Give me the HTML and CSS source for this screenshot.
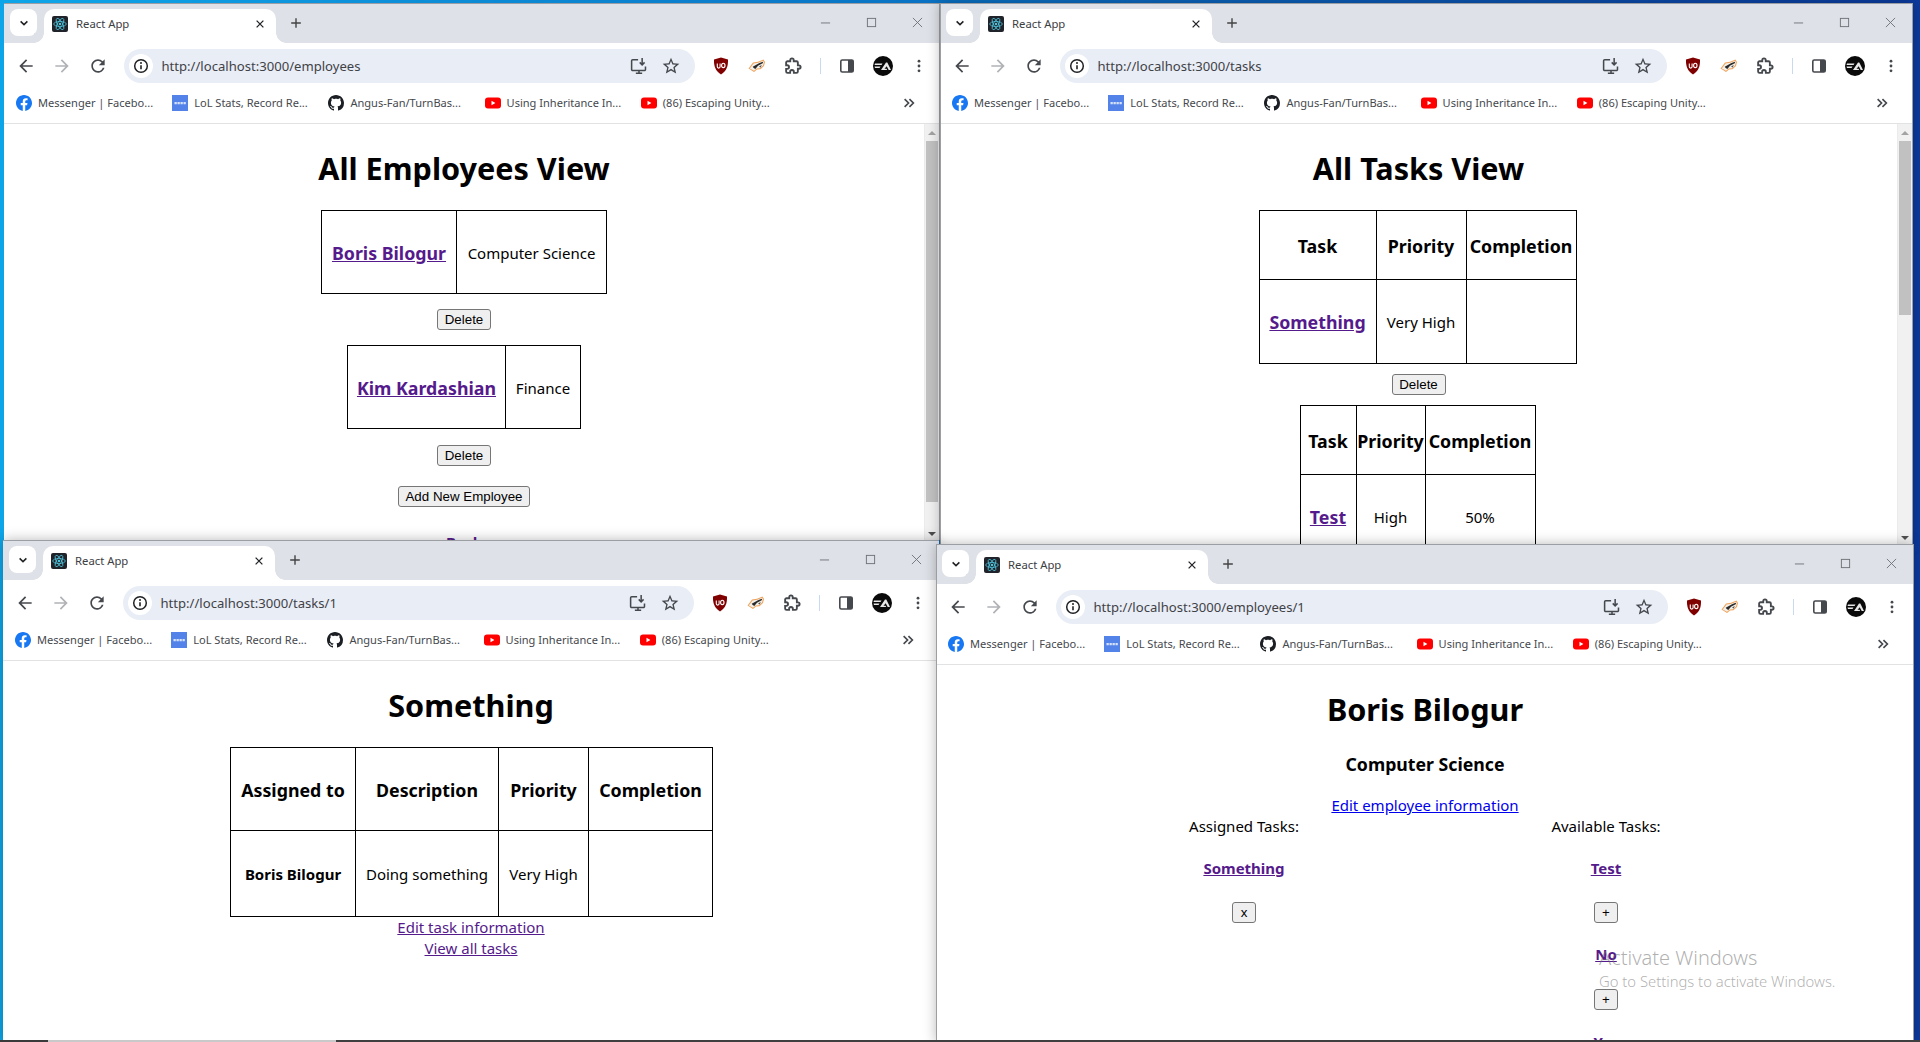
FILE: index.html
```html
<!DOCTYPE html>
<html lang="en">
<head>
<meta charset="utf-8">
<title>React App windows</title>
<link rel="stylesheet" href="styles.css">
</head>
<body>
<svg class="defs" aria-hidden="true">
  <symbol id="i-chev" viewBox="0 0 16 16"><path d="M3.5 5.8 8 10.2l4.5-4.4" fill="none" stroke="currentColor" stroke-width="2"/></symbol>
  <symbol id="i-x" viewBox="0 0 16 16"><path d="M3.5 3.5l9 9M12.5 3.5l-9 9" fill="none" stroke="currentColor" stroke-width="1.7"/></symbol>
  <symbol id="i-plus" viewBox="0 0 16 16"><path d="M8 2.5v11M2.5 8h11" fill="none" stroke="currentColor" stroke-width="1.6"/></symbol>
  <symbol id="i-back" viewBox="0 0 24 24"><path d="M20 11H7.83l5.59-5.59L12 4l-8 8 8 8 1.41-1.41L7.83 13H20v-2z" fill="currentColor"/></symbol>
  <symbol id="i-fwd" viewBox="0 0 24 24"><path d="M4 11h12.17l-5.59-5.59L12 4l8 8-8 8-1.41-1.41L16.17 13H4v-2z" fill="currentColor"/></symbol>
  <symbol id="i-reload" viewBox="0 0 24 24"><path d="M17.65 6.35A7.958 7.958 0 0 0 12 4c-4.42 0-7.99 3.58-7.99 8s3.57 8 7.99 8c3.73 0 6.84-2.55 7.73-6h-2.08A5.99 5.99 0 0 1 12 18c-3.31 0-6-2.69-6-6s2.69-6 6-6c1.66 0 3.14.69 4.22 1.78L13 11h7V4l-2.35 2.35z" fill="currentColor"/></symbol>
  <symbol id="i-info" viewBox="0 0 16 16"><circle cx="8" cy="8" r="6.3" fill="none" stroke="currentColor" stroke-width="1.5"/><path d="M8 7.2v4" stroke="currentColor" stroke-width="1.6"/><circle cx="8" cy="5" r="1" fill="currentColor"/></symbol>
  <symbol id="i-install" viewBox="0 0 20 20"><path d="M9 3H3a1.2 1.2 0 0 0-1.200 1.200v9.600A1.200 1.200 0 0 0 3 15h13a1.200 1.200 0 0 0 1.200-1.200V10.500M6.500 18h7M10 15v3" fill="none" stroke="currentColor" stroke-width="1.700"/><path d="M13.500 1v7.500M10.800 6l2.700 2.800L16.200 6" fill="none" stroke="currentColor" stroke-width="1.700"/></symbol>
  <symbol id="i-star" viewBox="0 0 24 24"><path d="M22 9.240l-7.190-.620L12 2 9.190 8.630 2 9.240l5.460 4.730L5.820 21 12 17.270 18.180 21l-1.630-7.030L22 9.240zM12 15.400l-3.760 2.270 1-4.280-3.320-2.880 4.380-.380L12 6.100l1.710 4.040 4.380.380-3.320 2.880 1 4.280L12 15.400z" fill="currentColor"/></symbol>
  <symbol id="i-ublock" viewBox="0 0 16 18"><path d="M8 .5 15 2.600c.3 6.400-1.400 11.600-7 14.900C2.400 14.200.7 9 1 2.600z" fill="#800000"/><path d="M4.300 6.500v3.300c0 1.700 2.800 1.700 2.800 0V6.500" fill="none" stroke="#fff" stroke-width="1.100"/><ellipse cx="10.300" cy="8.400" rx="1.700" ry="2.200" fill="none" stroke="#fff" stroke-width="1.100"/></symbol>
  <symbol id="i-badger" viewBox="0 0 18 14"><path d="M.5 9.500 5 3.500 10 2.800 15.500.5 17 3l-1 4-3.500 3.200-3.500.3-3 2.500-3.500-2.200z" fill="#efa45c"/><path d="M1.800 9.400 5.600 4.400 10.300 3.800 15 1.800 15.900 3.300 15 6.500 12 9.300 8.700 9.600 6 11.700 3.800 10.400z" fill="#f3f0ea"/><path d="M4.700 7.800 11 4.300l3.700-1.600.4 1.200L10 6.800 7.300 9.900 5.700 9z" fill="#2a2a2a"/><path d="M11 7.700l2.700-2-.9 2.700z" fill="#555"/></symbol>
  <symbol id="i-puzzle" viewBox="0 0 24 24"><path d="M20.500 11H19V7c0-1.100-.9-2-2-2h-4V3.500C13 2.120 11.880 1 10.500 1S8 2.120 8 3.500V5H4c-1.100 0-1.990.9-1.990 2v3.800H3.500c1.490 0 2.700 1.210 2.700 2.700s-1.210 2.700-2.700 2.700H2V20c0 1.100.9 2 2 2h3.800v-1.500c0-1.490 1.210-2.700 2.700-2.700 1.490 0 2.700 1.210 2.700 2.700V22H17c1.100 0 2-.9 2-2v-4h1.500c1.380 0 2.500-1.120 2.500-2.500S21.880 11 20.500 11z" fill="none" stroke="currentColor" stroke-width="2.700" transform="translate(1 1) scale(.92)"/></symbol>
  <symbol id="i-panel" viewBox="0 0 16 16"><rect x="1.800" y="2" width="12.400" height="12" rx="1.500" fill="#fff" stroke="currentColor" stroke-width="1.600"/><rect x="9" y="2" width="5.200" height="12" fill="currentColor"/></symbol>
  <symbol id="i-avatar" viewBox="0 0 20 20"><circle cx="10" cy="10" r="10" fill="#0a0a0a"/><path d="M2 7.500h7.500L8.500 9H1.500zM1.500 10.500h6l-1 1.500H2zM8 14l5-7.500h1.300L18 14h-2.300l-2-3.800L11.500 12.800h2l.7 1.200z" fill="#e8e8e8"/></symbol>
  <symbol id="i-dots" viewBox="0 0 16 16"><circle cx="8" cy="2.500" r="1.600" fill="currentColor"/><circle cx="8" cy="8" r="1.600" fill="currentColor"/><circle cx="8" cy="13.500" r="1.600" fill="currentColor"/></symbol>
  <symbol id="i-more" viewBox="0 0 16 16"><path d="M3 3.500 7.500 8 3 12.500M8.500 3.500 13 8l-4.500 4.500" fill="none" stroke="currentColor" stroke-width="1.900"/></symbol>
  <symbol id="i-min" viewBox="0 0 12 12"><path d="M1 6.500h10" stroke="currentColor" stroke-width="1"/></symbol>
  <symbol id="i-max" viewBox="0 0 12 12"><rect x="1.500" y="1.500" width="9" height="9" fill="none" stroke="currentColor" stroke-width="1"/></symbol>
  <symbol id="i-close" viewBox="0 0 12 12"><path d="M1 1l10 10M11 1 1 11" stroke="currentColor" stroke-width="1"/></symbol>
  <symbol id="i-react" viewBox="0 0 16 16"><rect width="16" height="16" rx="2" fill="#20232a"/><g fill="none" stroke="#4fc3dc" stroke-width=".8"><ellipse cx="8" cy="8" rx="6.300" ry="2.500"/><ellipse cx="8" cy="8" rx="6.300" ry="2.500" transform="rotate(60 8 8)"/><ellipse cx="8" cy="8" rx="6.300" ry="2.500" transform="rotate(120 8 8)"/></g><circle cx="8" cy="8" r="1.300" fill="#4fc3dc"/></symbol>
  <symbol id="i-fb" viewBox="0 0 24 24"><circle cx="12" cy="12" r="11.500" fill="#fff"/><path d="M24 12.073c0-6.627-5.373-12-12-12s-12 5.373-12 12c0 5.990 4.388 10.954 10.125 11.854v-8.385H7.078v-3.470h3.047V9.430c0-3.007 1.792-4.669 4.533-4.669 1.312 0 2.686.235 2.686.235v2.953H15.830c-1.491 0-1.956.925-1.956 1.874v2.250h3.328l-.532 3.470h-2.796v8.385C19.612 23.027 24 18.062 24 12.073z" fill="#1877f2"/></symbol>
  <symbol id="i-opgg" viewBox="0 0 16 16"><rect width="16" height="16" fill="#5383e8"/><path d="M2.500 7h2.300v2.200H2.500zM5.500 7h2.300v2.200H5.500zM8.500 7h2.300v2.200H8.500zM11.500 7h2.300v2.200h-2.300z" fill="#d6e2fb"/></symbol>
  <symbol id="i-gh" viewBox="0 0 16 16"><path d="M8 0C3.580 0 0 3.580 0 8c0 3.540 2.290 6.530 5.470 7.590.4.070.55-.17.55-.38 0-.19-.01-.82-.01-1.490-2.010.37-2.530-.49-2.690-.94-.09-.23-.48-.94-.82-1.130-.28-.15-.68-.52-.01-.53.63-.01 1.080.58 1.230.82.72 1.210 1.870.87 2.330.66.07-.52.28-.87.51-1.070-1.780-.2-3.640-.89-3.640-3.950 0-.87.31-1.590.82-2.150-.08-.2-.36-1.020.08-2.120 0 0 .67-.21 2.200.82.64-.18 1.320-.27 2-.27.68 0 1.360.09 2 .27 1.530-1.040 2.200-.82 2.200-.82.44 1.100.16 1.920.08 2.120.51.56.82 1.270.82 2.150 0 3.070-1.870 3.750-3.650 3.950.29.25.54.73.54 1.480 0 1.070-.01 1.930-.01 2.200 0 .21.15.46.55.38A8.013 8.013 0 0016 8c0-4.420-3.580-8-8-8z" fill="#1b1f23"/></symbol>
  <symbol id="i-yt" viewBox="0 0 16 16"><rect y="2.500" width="16" height="11" rx="3" fill="#f00"/><path d="M6.500 5.700v4.600L10.400 8z" fill="#fff"/></symbol>
</svg>

<main class="desktop">

  <section class="win win1">
    <div class="strip">
      <span class="drop"><svg class="ic12"><use href="#i-chev"/></svg></span>
      <div class="tab">
        <svg class="ic16"><use href="#i-react"/></svg>
        <span class="tab-title">React App</span>
        <svg class="ic12 tab-x"><use href="#i-x"/></svg>
      </div>
      <svg class="ic14 plus"><use href="#i-plus"/></svg>
      <div class="controls">
        <span class="ctl"><svg class="ic11"><use href="#i-min"/></svg></span>
        <span class="ctl"><svg class="ic11"><use href="#i-max"/></svg></span>
        <span class="ctl"><svg class="ic11"><use href="#i-close"/></svg></span>
      </div>
    </div>
    <div class="toolbar">
      <span class="tb"><svg class="ic20"><use href="#i-back"/></svg></span>
      <span class="tb muted"><svg class="ic20"><use href="#i-fwd"/></svg></span>
      <span class="tb"><svg class="ic20"><use href="#i-reload"/></svg></span>
      <div class="omni">
        <span class="info"><svg class="ic16"><use href="#i-info"/></svg></span>
        <span class="url">http://localhost:3000/employees</span>
        <span class="om"><svg class="ic18"><use href="#i-install"/></svg></span>
        <span class="om"><svg class="ic20"><use href="#i-star"/></svg></span>
      </div>
      <span class="tb"><svg class="ic18"><use href="#i-ublock"/></svg></span>
      <span class="tb"><svg class="ic18"><use href="#i-badger"/></svg></span>
      <span class="tb"><svg class="ic18"><use href="#i-puzzle"/></svg></span>
      <span class="sep"></span>
      <span class="tb"><svg class="ic16"><use href="#i-panel"/></svg></span>
      <span class="tb"><svg class="ic20"><use href="#i-avatar"/></svg></span>
      <span class="tb"><svg class="ic14"><use href="#i-dots"/></svg></span>
    </div>
    <div class="bookmarks">
      <span class="bm"><svg class="ic16"><use href="#i-fb"/></svg>Messenger | Facebo...</span>
      <span class="bm"><svg class="ic16"><use href="#i-opgg"/></svg>LoL Stats, Record Re...</span>
      <span class="bm"><svg class="ic16"><use href="#i-gh"/></svg>Angus-Fan/TurnBas...</span>
      <span class="bm"><svg class="ic16"><use href="#i-yt"/></svg>Using Inheritance In...</span>
      <span class="bm"><svg class="ic16"><use href="#i-yt"/></svg>(86) Escaping Unity...</span>
      <svg class="ic14 more"><use href="#i-more"/></svg>
    </div>
    <div class="viewport">
      <div class="page">
        <h1 class="title">All Employees View</h1>
        <table class="grid t-emp1">
          <colgroup><col class="w135"><col class="w150"></colgroup>
          <tr class="r83"><td><a class="link-h3" href="#">Boris Bilogur</a></td><td>Computer Science</td></tr>
        </table>
        <button class="btn gap15" type="button">Delete</button>
        <table class="grid t-emp2">
          <colgroup><col class="w158"><col class="w75"></colgroup>
          <tr class="r83"><td><a class="link-h3" href="#">Kim Kardashian</a></td><td>Finance</td></tr>
        </table>
        <button class="btn gap-del2" type="button">Delete</button>
        <button class="btn" type="button">Add New Employee</button>
        <a class="link-h4 back" href="#">Back</a>
      </div>
      <div class="scrollbar">
        <span class="arrow up"></span>
        <span class="thumb thumb-long"></span>
        <span class="track"></span>
        <span class="arrow down"></span>
      </div>
    </div>
  </section>

  <section class="win win2">
    <div class="strip">
      <span class="drop"><svg class="ic12"><use href="#i-chev"/></svg></span>
      <div class="tab">
        <svg class="ic16"><use href="#i-react"/></svg>
        <span class="tab-title">React App</span>
        <svg class="ic12 tab-x"><use href="#i-x"/></svg>
      </div>
      <svg class="ic14 plus"><use href="#i-plus"/></svg>
      <div class="controls">
        <span class="ctl"><svg class="ic11"><use href="#i-min"/></svg></span>
        <span class="ctl"><svg class="ic11"><use href="#i-max"/></svg></span>
        <span class="ctl"><svg class="ic11"><use href="#i-close"/></svg></span>
      </div>
    </div>
    <div class="toolbar">
      <span class="tb"><svg class="ic20"><use href="#i-back"/></svg></span>
      <span class="tb muted"><svg class="ic20"><use href="#i-fwd"/></svg></span>
      <span class="tb"><svg class="ic20"><use href="#i-reload"/></svg></span>
      <div class="omni">
        <span class="info"><svg class="ic16"><use href="#i-info"/></svg></span>
        <span class="url">http://localhost:3000/tasks</span>
        <span class="om"><svg class="ic18"><use href="#i-install"/></svg></span>
        <span class="om"><svg class="ic20"><use href="#i-star"/></svg></span>
      </div>
      <span class="tb"><svg class="ic18"><use href="#i-ublock"/></svg></span>
      <span class="tb"><svg class="ic18"><use href="#i-badger"/></svg></span>
      <span class="tb"><svg class="ic18"><use href="#i-puzzle"/></svg></span>
      <span class="sep"></span>
      <span class="tb"><svg class="ic16"><use href="#i-panel"/></svg></span>
      <span class="tb"><svg class="ic20"><use href="#i-avatar"/></svg></span>
      <span class="tb"><svg class="ic14"><use href="#i-dots"/></svg></span>
    </div>
    <div class="bookmarks">
      <span class="bm"><svg class="ic16"><use href="#i-fb"/></svg>Messenger | Facebo...</span>
      <span class="bm"><svg class="ic16"><use href="#i-opgg"/></svg>LoL Stats, Record Re...</span>
      <span class="bm"><svg class="ic16"><use href="#i-gh"/></svg>Angus-Fan/TurnBas...</span>
      <span class="bm"><svg class="ic16"><use href="#i-yt"/></svg>Using Inheritance In...</span>
      <span class="bm"><svg class="ic16"><use href="#i-yt"/></svg>(86) Escaping Unity...</span>
      <svg class="ic14 more"><use href="#i-more"/></svg>
    </div>
    <div class="viewport">
      <div class="page">
        <h1 class="title">All Tasks View</h1>
        <table class="grid t-task1 nudge-left">
          <colgroup><col class="w117"><col class="w90"><col class="w110"></colgroup>
          <tr class="r69"><th>Task</th><th>Priority</th><th>Completion</th></tr>
          <tr class="r84"><td><a class="link-h3" href="#">Something</a></td><td>Very High</td><td></td></tr>
        </table>
        <button class="btn gap10" type="button">Delete</button>
        <table class="grid t-task2 nudge-left">
          <colgroup><col class="w56"><col class="w69"><col class="w110"></colgroup>
          <tr class="r69"><th>Task</th><th>Priority</th><th>Completion</th></tr>
          <tr class="r84"><td><a class="link-h3" href="#">Test</a></td><td>High</td><td>50%</td></tr>
        </table>
      </div>
      <div class="scrollbar">
        <span class="arrow up"></span>
        <span class="thumb thumb-short"></span>
        <span class="track"></span>
        <span class="arrow down"></span>
      </div>
    </div>
  </section>

  <section class="win win3">
    <div class="strip">
      <span class="drop"><svg class="ic12"><use href="#i-chev"/></svg></span>
      <div class="tab">
        <svg class="ic16"><use href="#i-react"/></svg>
        <span class="tab-title">React App</span>
        <svg class="ic12 tab-x"><use href="#i-x"/></svg>
      </div>
      <svg class="ic14 plus"><use href="#i-plus"/></svg>
      <div class="controls">
        <span class="ctl"><svg class="ic11"><use href="#i-min"/></svg></span>
        <span class="ctl"><svg class="ic11"><use href="#i-max"/></svg></span>
        <span class="ctl"><svg class="ic11"><use href="#i-close"/></svg></span>
      </div>
    </div>
    <div class="toolbar">
      <span class="tb"><svg class="ic20"><use href="#i-back"/></svg></span>
      <span class="tb muted"><svg class="ic20"><use href="#i-fwd"/></svg></span>
      <span class="tb"><svg class="ic20"><use href="#i-reload"/></svg></span>
      <div class="omni">
        <span class="info"><svg class="ic16"><use href="#i-info"/></svg></span>
        <span class="url">http://localhost:3000/tasks/1</span>
        <span class="om"><svg class="ic18"><use href="#i-install"/></svg></span>
        <span class="om"><svg class="ic20"><use href="#i-star"/></svg></span>
      </div>
      <span class="tb"><svg class="ic18"><use href="#i-ublock"/></svg></span>
      <span class="tb"><svg class="ic18"><use href="#i-badger"/></svg></span>
      <span class="tb"><svg class="ic18"><use href="#i-puzzle"/></svg></span>
      <span class="sep"></span>
      <span class="tb"><svg class="ic16"><use href="#i-panel"/></svg></span>
      <span class="tb"><svg class="ic20"><use href="#i-avatar"/></svg></span>
      <span class="tb"><svg class="ic14"><use href="#i-dots"/></svg></span>
    </div>
    <div class="bookmarks">
      <span class="bm"><svg class="ic16"><use href="#i-fb"/></svg>Messenger | Facebo...</span>
      <span class="bm"><svg class="ic16"><use href="#i-opgg"/></svg>LoL Stats, Record Re...</span>
      <span class="bm"><svg class="ic16"><use href="#i-gh"/></svg>Angus-Fan/TurnBas...</span>
      <span class="bm"><svg class="ic16"><use href="#i-yt"/></svg>Using Inheritance In...</span>
      <span class="bm"><svg class="ic16"><use href="#i-yt"/></svg>(86) Escaping Unity...</span>
      <svg class="ic14 more"><use href="#i-more"/></svg>
    </div>
    <div class="viewport">
      <div class="page">
        <h1 class="title">Something</h1>
        <table class="grid t-detail nudge-right">
          <colgroup><col class="w125"><col class="w143"><col class="w90"><col class="w124"></colgroup>
          <tr class="r83"><th>Assigned to</th><th>Description</th><th>Priority</th><th>Completion</th></tr>
          <tr class="r86"><td><strong class="name">Boris Bilogur</strong></td><td>Doing something</td><td>Very High</td><td></td></tr>
        </table>
        <a class="plain-link visited" href="#">Edit task information</a>
        <a class="plain-link visited" href="#">View all tasks</a>
      </div>
    </div>
  </section>

  <section class="win win4">
    <div class="strip">
      <span class="drop"><svg class="ic12"><use href="#i-chev"/></svg></span>
      <div class="tab">
        <svg class="ic16"><use href="#i-react"/></svg>
        <span class="tab-title">React App</span>
        <svg class="ic12 tab-x"><use href="#i-x"/></svg>
      </div>
      <svg class="ic14 plus"><use href="#i-plus"/></svg>
      <div class="controls">
        <span class="ctl"><svg class="ic11"><use href="#i-min"/></svg></span>
        <span class="ctl"><svg class="ic11"><use href="#i-max"/></svg></span>
        <span class="ctl"><svg class="ic11"><use href="#i-close"/></svg></span>
      </div>
    </div>
    <div class="toolbar">
      <span class="tb"><svg class="ic20"><use href="#i-back"/></svg></span>
      <span class="tb muted"><svg class="ic20"><use href="#i-fwd"/></svg></span>
      <span class="tb"><svg class="ic20"><use href="#i-reload"/></svg></span>
      <div class="omni">
        <span class="info"><svg class="ic16"><use href="#i-info"/></svg></span>
        <span class="url">http://localhost:3000/employees/1</span>
        <span class="om"><svg class="ic18"><use href="#i-install"/></svg></span>
        <span class="om"><svg class="ic20"><use href="#i-star"/></svg></span>
      </div>
      <span class="tb"><svg class="ic18"><use href="#i-ublock"/></svg></span>
      <span class="tb"><svg class="ic18"><use href="#i-badger"/></svg></span>
      <span class="tb"><svg class="ic18"><use href="#i-puzzle"/></svg></span>
      <span class="sep"></span>
      <span class="tb"><svg class="ic16"><use href="#i-panel"/></svg></span>
      <span class="tb"><svg class="ic20"><use href="#i-avatar"/></svg></span>
      <span class="tb"><svg class="ic14"><use href="#i-dots"/></svg></span>
    </div>
    <div class="bookmarks">
      <span class="bm"><svg class="ic16"><use href="#i-fb"/></svg>Messenger | Facebo...</span>
      <span class="bm"><svg class="ic16"><use href="#i-opgg"/></svg>LoL Stats, Record Re...</span>
      <span class="bm"><svg class="ic16"><use href="#i-gh"/></svg>Angus-Fan/TurnBas...</span>
      <span class="bm"><svg class="ic16"><use href="#i-yt"/></svg>Using Inheritance In...</span>
      <span class="bm"><svg class="ic16"><use href="#i-yt"/></svg>(86) Escaping Unity...</span>
      <svg class="ic14 more"><use href="#i-more"/></svg>
    </div>
    <div class="viewport">
      <div class="page">
        <h1 class="title">Boris Bilogur</h1>
        <h3 class="subtitle">Computer Science</h3>
        <a class="plain-link blue" href="#">Edit employee information</a>
        <div class="columns">
          <div class="column">
            <p class="col-head">Assigned Tasks:</p>
            <a class="link-h4" href="#">Something</a>
            <button class="btn small" type="button">x</button>
          </div>
          <div class="column">
            <p class="col-head">Available Tasks:</p>
            <a class="link-h4" href="#">Test</a>
            <button class="btn small" type="button">+</button>
            <a class="link-h4" href="#">No</a>
            <button class="btn small last-plus" type="button">+</button>
            <a class="link-h4" href="#">Yes</a>
          </div>
        </div>
      </div>
    </div>
  </section>

  <div class="watermark">
    <p class="wm-big">Activate Windows</p>
    <p class="wm-small">Go to Settings to activate Windows.</p>
  </div>

  <div class="taskbar"><span class="task-a"></span><span class="task-b"></span><span class="task-c"></span></div>
</main>
</body>
</html>
```

FILE: styles.css
```css
* { box-sizing: border-box; }
html, body { margin: 0; padding: 0; height: 100%; overflow: hidden; }
body { font-family: "Noto Sans", "Open Sans", sans-serif; font-size: 15px; color: #000; }
.defs { position: absolute; width: 0; height: 0; }
svg { display: block; flex: none; }
.ic11 { width: 11px; height: 11px; }
.ic12 { width: 12px; height: 12px; }
.ic14 { width: 14px; height: 14px; }
.ic16 { width: 16px; height: 16px; }
.ic18 { width: 18px; height: 18px; }
.ic20 { width: 20px; height: 20px; }

.desktop {
  position: relative; width: 1920px; height: 1042px; overflow: hidden;
  background: linear-gradient(90deg, #0ea5e8 0%, #0a70c2 50%, #0c3a9e 100%);
}

/* Windows on the desktop */
.win { position: absolute; display: flex; flex-direction: column; background: #fff; overflow: hidden; box-shadow: 0 0 12px rgba(0,0,0,.28); }
.win::after { content: ""; position: absolute; inset: 0; border: 0 solid #9b9ea3; pointer-events: none; }
.win1 { left: 4px; top: 3px; width: 936px; height: 537px; box-shadow: none; }
.win1::after { border-width: 1px 1px 0 0; }
.win2 { left: 940px; top: 3px; width: 973px; height: 541px; }
.win2::after { border-width: 1px 1px 0 1px; }
.win3 { left: 3px; top: 540px; width: 936px; height: 502px; }
.win3::after { border-width: 1px 0 0 0; }
.win4 { left: 936px; top: 544px; width: 978px; height: 498px; }
.win4::after { border-width: 1px 1px 0 1px; }

/* Tab strip */
.strip { flex: none; height: 40px; background: #dee1e7; display: flex; align-items: flex-start; padding: 6px 0 0 6px; color: #3c4043; }
.drop { width: 27px; height: 27px; background: #fff; border-radius: 8px; display: flex; align-items: center; justify-content: center; color: #202124; margin-right: 7px; }
.tab { position: relative; width: 232px; height: 34px; background: #fff; border-radius: 10px 10px 0 0; display: flex; align-items: center; padding: 0 10px 5px 8px; z-index: 1; }
.tab::before, .tab::after { content: ""; position: absolute; bottom: 0; width: 10px; height: 10px; }
.tab::before { left: -10px; background: radial-gradient(circle at 0 0, #dee1e7 9.5px, #fff 10px); }
.tab::after { right: -10px; background: radial-gradient(circle at 100% 0, #dee1e7 9.5px, #fff 10px); }
.tab-title { flex: 1; margin-left: 8px; font-size: 11.300px; line-height: 16px; color: #3c4043; white-space: nowrap; }
.tab-x { color: #202124; }
.plus { margin: 7px 0 0 13px; color: #444; }
.controls { margin-left: auto; display: flex; gap: 2px; margin-top: -6px; height: 40px; align-items: center; padding: 0 1px 2px 0; color: #6e7276; }
.ctl { width: 44px; display: flex; justify-content: center; }

/* Toolbar */
.toolbar { flex: none; height: 46px; background: #fff; border-radius: 8px 8px 0 0; display: flex; align-items: center; padding: 0 3px 0 4px; color: #45484d; position: relative; }
.win2 .toolbar, .win4 .toolbar { padding-right: 4px; }
.tb { width: 36px; height: 36px; display: flex; align-items: center; justify-content: center; }
.muted { color: #b0b2b6; }
.sep { width: 18px; display: flex; justify-content: center; }
.sep::before { content: ""; width: 1px; height: 16px; background: #c9d9f2; }
.omni { flex: 1; height: 34px; margin: 0 8px; background: #e9edf6; border-radius: 17px; display: flex; align-items: center; padding: 0 8px 0 5px; min-width: 0; }
.info { width: 24px; height: 24px; border-radius: 50%; background: #fff; display: flex; align-items: center; justify-content: center; color: #202124; margin-right: 8.500px; }
.url { flex: 1; font-size: 13.100px; line-height: 18px; color: #3f4246; white-space: nowrap; }
.om { width: 32px; display: flex; justify-content: center; }

/* Bookmarks */
.bookmarks { flex: none; height: 35px; background: #fff; border-bottom: 1px solid #e1e2e4; display: flex; align-items: center; padding: 0 0 6px 12px; color: #45484d; }
.bm { width: 156.200px; display: flex; align-items: center; gap: 6px; font-size: 11.050px; line-height: 16px; white-space: nowrap; }
.more { margin-left: auto; margin-right: 24px; color: #45484d; }

/* Page area */
.viewport { flex: 1; min-height: 0; display: flex; }
.page { flex: 1; min-width: 0; display: flex; flex-direction: column; align-items: center; overflow: hidden; }
.title { margin: 23px 0 20px; font-size: 30.600px; line-height: 43px; font-weight: 700; white-space: nowrap; }
.subtitle { margin: 1px 0 18px; font-size: 17.700px; line-height: 25px; font-weight: 700; }

.grid { border-collapse: collapse; table-layout: fixed; flex: none; }
.grid th, .grid td { border: 1px solid #000; padding: 2px 0 0; text-align: center; vertical-align: middle; font-size: 15px; line-height: 21px; }
.grid th { font-size: 17.800px; font-weight: 700; line-height: 25px; }
.t-emp1 { width: 285px; }
.t-emp2 { width: 233px; }
.t-task1 { width: 317px; }
.t-task2 { width: 235px; }
.t-detail { width: 482px; }
.nudge-left { margin-right: 2px; }
.nudge-right { margin-left: 1px; }
.w56 { width: 56px; } .w69 { width: 69px; } .w75 { width: 75px; } .w90 { width: 90px; }
.w110 { width: 110px; } .w117 { width: 117px; } .w124 { width: 124px; } .w125 { width: 125px; } .w135 { width: 135px; }
.w143 { width: 143px; } .w150 { width: 150px; } .w158 { width: 158px; }
.r69 th, .r69 td { height: 69px; }
.r83 th, .r83 td { height: 83px; }
.r84 th, .r84 td { height: 84px; }
.r86 th, .r86 td { height: 86px; }

.link-h3 { font-size: 17.800px; line-height: 25px; font-weight: 700; color: #551a8b; text-decoration: underline; }
.link-h4 { font-size: 15px; line-height: 21px; font-weight: 700; color: #551a8b; text-decoration: underline; margin: 21px 0 22px; white-space: nowrap; }
.name { font-size: 15px; font-weight: 700; }
.plain-link { font-size: 15px; line-height: 21px; text-decoration: underline; white-space: nowrap; }
.visited { color: #551a8b; }
.blue { color: #0000ee; }

.btn {
  flex: none; height: 21px; padding: 0 6.500px; font-family: "Liberation Sans", Arial, sans-serif; font-size: 13.333px; line-height: 15px;
  color: #000; background: #efefef; border: 1px solid #767676; border-radius: 3px; min-width: 54px;
}
.gap15 { margin: 15px 0; }
.gap-del2 { margin: 16px 0 20px; }
.gap10 { margin: 10px 0; }
.small { min-width: 23px; padding: 0; width: 24px; margin: 1px 0 0; }
.last-plus { margin: 2px 0 1px; }
.back { margin-top: 25px; }

.columns { display: flex; justify-content: center; gap: 242px; width: 100%; }
.column { width: 120px; display: flex; flex-direction: column; align-items: center; }
.col-head { margin: 0; font-size: 15px; line-height: 21px; white-space: nowrap; }

/* Scrollbar */
.scrollbar { flex: none; width: 16px; background: #f1f1f1; border-left: 1px solid #ebebeb; display: flex; flex-direction: column; align-items: stretch; padding: 0 2px 0 1px; }
.arrow { flex: none; height: 17px; display: flex; justify-content: center; }
.arrow::before { content: ""; width: 0; height: 0; border-left: 4px solid transparent; border-right: 4px solid transparent; }
.up { align-items: center; }
.up::before { border-bottom: 4px solid #a3a3a3; }
.down { align-items: flex-end; padding-bottom: 4px; }
.down::before { border-top: 4px solid #505050; }
.thumb { flex: none; background: #c1c1c1; }
.thumb-long { height: 361px; }
.thumb-short { height: 174px; }
.track { flex: 1; }

/* Activation watermark */
.watermark { position: absolute; left: 1599px; top: 944px; color: rgba(110,110,110,.55); pointer-events: none; }
.wm-big { margin: 0; font-size: 20px; line-height: 28px; font-weight: 300; white-space: nowrap; }
.wm-small { margin: 0; font-size: 14.800px; line-height: 18px; font-weight: 300; white-space: nowrap; }

/* Taskbar peeking out */
.taskbar { position: absolute; left: 0; right: 0; bottom: 0; height: 2px; display: flex; }
.task-a { width: 48px; background: #3a3a3a; }
.task-b { width: 288px; background: #c9c9c9; }
.task-c { flex: 1; background: #3f3f3f; }
```
